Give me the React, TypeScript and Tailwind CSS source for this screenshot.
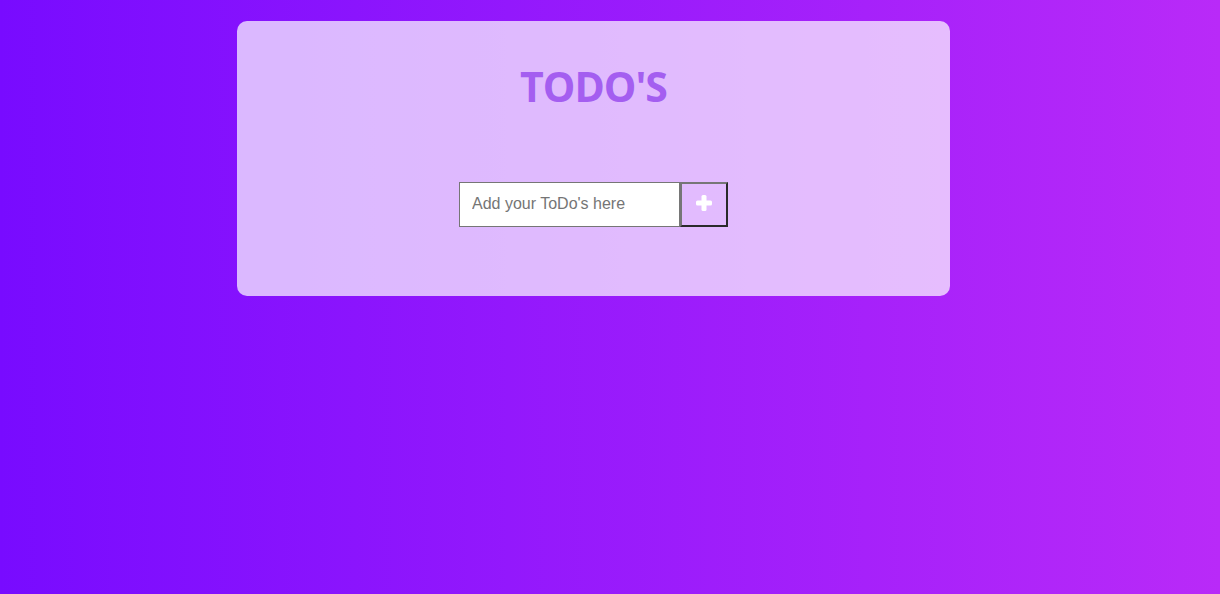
import React from 'react'

const PlusIcon = () => (
  <svg width="16" height="16" viewBox="0 0 16 16" fill="white" className="mb-[4px]">
    <rect x="5.5" y="0" width="5" height="16" rx="1.5" />
    <rect x="0" y="5.5" width="16" height="5" rx="1.5" />
  </svg>
)

const App = () => {
  return (
    <div className="min-h-[594px] w-full bg-[linear-gradient(to_right,#780bff,#b92af8)] pt-[21px]">
      <div className="ml-[237px] w-[713px] h-[275px] rounded-[10px] bg-white/70 flex flex-col items-center pt-[37px]">
        <h1 className="font-['Open_Sans',sans-serif] font-bold text-[41px] leading-[57px] text-[#a45ef0] tracking-[-1px]">
          TODO'S
        </h1>
        <div className="flex mt-[67px]">
          <input
            type="text"
            placeholder="Add your ToDo's here"
            className="w-[221px] h-[45px] border border-[#767676] bg-white px-[12px] pb-[2px] font-['Liberation_Sans',Arial,sans-serif] text-[16px] text-black placeholder:text-[#757575] outline-none"
          />
          <button className="w-[48px] h-[45px] border-2 border-t-[#767676] border-l-[#767676] border-r-[#2a2a2a] border-b-[#2a2a2a] bg-transparent flex items-center justify-center">
            <PlusIcon />
          </button>
        </div>
      </div>
    </div>
  )
}

export default App
